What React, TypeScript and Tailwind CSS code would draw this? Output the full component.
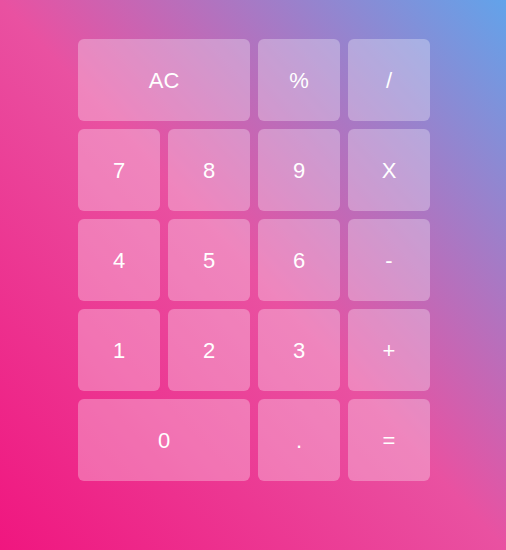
export default function App() {
    const keys: { label: string; wide?: boolean }[] = [
        { label: "AC", wide: true },
        { label: "%" },
        { label: "/" },
        { label: "7" },
        { label: "8" },
        { label: "9" },
        { label: "X" },
        { label: "4" },
        { label: "5" },
        { label: "6" },
        { label: "-" },
        { label: "1" },
        { label: "2" },
        { label: "3" },
        { label: "+" },
        { label: "0", wide: true },
        { label: "." },
        { label: "=" },
    ];

    return (
        <main className="w-full h-[550px] flex justify-center pt-[39px] pl-[2px] bg-[linear-gradient(to_top_right,#f0167f,#e951a1,#62a3ea)] font-['Liberation_Sans',Arial,sans-serif]">
            <div className="grid grid-cols-[repeat(4,82px)] auto-rows-[82px] gap-2 h-fit">
                {keys.map(({ label, wide }) => (
                    <button
                        key={label}
                        className={`${wide ? "col-span-2" : ""} rounded-md bg-white/30 text-white text-[22px] flex items-center justify-center`}
                    >
                        {label}
                    </button>
                ))}
            </div>
        </main>
    );
}
